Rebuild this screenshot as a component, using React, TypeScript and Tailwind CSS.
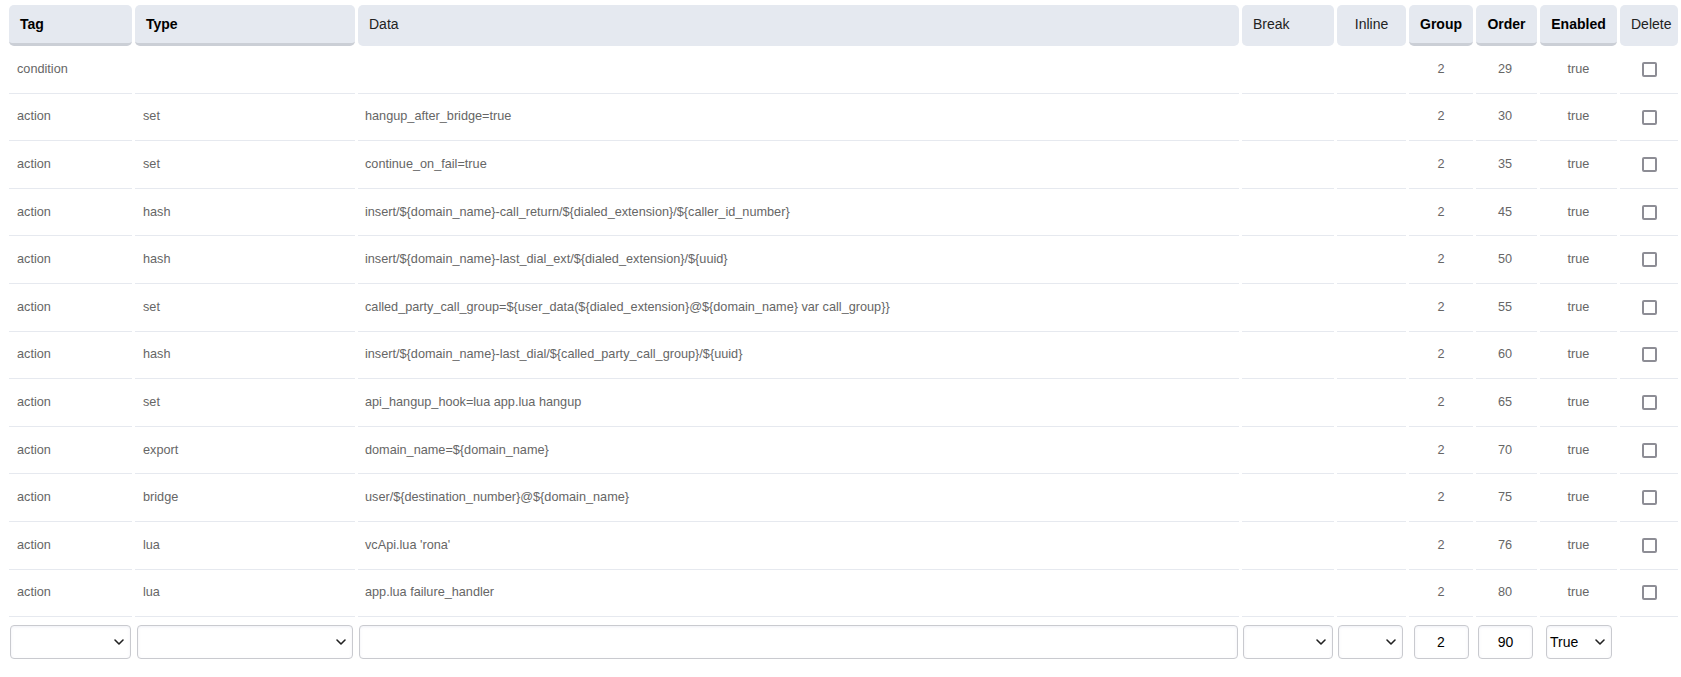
import React from 'react';
import { ChevronDown } from 'lucide-react';

interface Row {
  tag: string;
  type: string;
  data: string;
  group: string;
  order: string;
  enabled: string;
}

const rows: Row[] = [
  { tag: 'condition', type: '', data: '', group: '2', order: '29', enabled: 'true' },
  { tag: 'action', type: 'set', data: 'hangup_after_bridge=true', group: '2', order: '30', enabled: 'true' },
  { tag: 'action', type: 'set', data: 'continue_on_fail=true', group: '2', order: '35', enabled: 'true' },
  { tag: 'action', type: 'hash', data: 'insert/${domain_name}-call_return/${dialed_extension}/${caller_id_number}', group: '2', order: '45', enabled: 'true' },
  { tag: 'action', type: 'hash', data: 'insert/${domain_name}-last_dial_ext/${dialed_extension}/${uuid}', group: '2', order: '50', enabled: 'true' },
  { tag: 'action', type: 'set', data: 'called_party_call_group=${user_data(${dialed_extension}@${domain_name} var call_group}}', group: '2', order: '55', enabled: 'true' },
  { tag: 'action', type: 'hash', data: 'insert/${domain_name}-last_dial/${called_party_call_group}/${uuid}', group: '2', order: '60', enabled: 'true' },
  { tag: 'action', type: 'set', data: 'api_hangup_hook=lua app.lua hangup', group: '2', order: '65', enabled: 'true' },
  { tag: 'action', type: 'export', data: 'domain_name=${domain_name}', group: '2', order: '70', enabled: 'true' },
  { tag: 'action', type: 'bridge', data: 'user/${destination_number}@${domain_name}', group: '2', order: '75', enabled: 'true' },
  { tag: 'action', type: 'lua', data: "vcApi.lua 'rona'", group: '2', order: '76', enabled: 'true' },
  { tag: 'action', type: 'lua', data: 'app.lua failure_handler', group: '2', order: '80', enabled: 'true' },
];

const field =
  'h-[34px] rounded-[4px] border border-[#c9cacf] bg-white shadow-[inset_0_1px_3px_rgba(120,130,180,0.12)] text-[14px] text-black outline-none';

function Select({ value = '', className = '' }: { value?: string; className?: string }) {
  return (
    <div className={`relative ${className}`}>
      <div className={`${field} flex items-center pl-[3px] w-full`}>{value}</div>
      <ChevronDown
        size={16}
        strokeWidth={2.4}
        className="pointer-events-none absolute right-[4px] top-1/2 -translate-y-1/2 text-[#222]"
      />
    </div>
  );
}

const thBase = 'h-[41px] px-[11px] rounded-[5px] border-b-[3px] text-[14px] align-middle';
const thBold = `${thBase} bg-[#e5e9f0] border-[#cbcfd6] font-bold text-black`;
const thPlain = `${thBase} bg-[#e5e9f0] border-[#e5e9f0] font-normal text-[#222]`;
const td = 'h-[47.6px] border-b border-[#e6e9ef] text-[12.7px] text-[#666] align-middle';

export default function App() {
  return (
    <div className="pl-[6px] pt-[5px] bg-white min-h-screen font-['Liberation_Sans',Arial,sans-serif]">
      <table className="w-full table-fixed border-separate border-spacing-x-[3px] border-spacing-y-0">
        <colgroup>
          <col className="w-[123px]" />
          <col className="w-[220px]" />
          <col />
          <col className="w-[92px]" />
          <col className="w-[69px]" />
          <col className="w-[64px]" />
          <col className="w-[61px]" />
          <col className="w-[77px]" />
          <col className="w-[58px]" />
        </colgroup>
        <thead>
          <tr>
            <th className={`${thBold} text-left`}>Tag</th>
            <th className={`${thBold} text-left`}>Type</th>
            <th className={`${thPlain} text-left`}>Data</th>
            <th className={`${thPlain} text-left`}>Break</th>
            <th className={`${thPlain} text-center`}>Inline</th>
            <th className={`${thBold} text-center px-0`}>Group</th>
            <th className={`${thBold} text-center px-0`}>Order</th>
            <th className={`${thBold} text-center px-0`}>Enabled</th>
            <th className={`${thPlain} text-center px-0`}>Delete</th>
          </tr>
        </thead>
        <tbody>
          {rows.map((r, i) => (
            <tr key={i}>
              <td className={`${td} pl-[8px]`}>{r.tag}</td>
              <td className={`${td} pl-[8px]`}>{r.type}</td>
              <td className={`${td} pl-[7px] whitespace-nowrap`}>{r.data}</td>
              <td className={td}></td>
              <td className={td}></td>
              <td className={`${td} text-center`}>{r.group}</td>
              <td className={`${td} text-center pr-[3px]`}>{r.order}</td>
              <td className={`${td} text-center`}>{r.enabled}</td>
              <td className={`${td} text-center`}>
                <span className="inline-block align-middle w-[15px] h-[15px] rounded-[2px] border-2 border-[#8d8d95] bg-white" />
              </td>
            </tr>
          ))}
          {/* new entry row */}
          <tr>
            <td className="pt-[8px] px-[1px] align-top">
              <Select />
            </td>
            <td className="pt-[8px] px-[2px] align-top">
              <Select />
            </td>
            <td className="pt-[8px] px-[1px] align-top">
              <input className={`${field} w-full px-2`} defaultValue="" />
            </td>
            <td className="pt-[8px] px-[1px] align-top">
              <Select />
            </td>
            <td className="pt-[8px] pl-[1px] pr-[3px] align-top">
              <Select />
            </td>
            <td className="pt-[8px] align-top">
              <input className={`${field} w-[55px] mx-auto block text-center`} defaultValue="2" />
            </td>
            <td className="pt-[8px] align-top">
              <input className={`${field} w-[55px] ml-[2px] block text-center`} defaultValue="90" />
            </td>
            <td className="pt-[8px] align-top">
              <Select value="True" className="w-[66px] ml-[6px]" />
            </td>
            <td></td>
          </tr>
        </tbody>
      </table>
    </div>
  );
}
